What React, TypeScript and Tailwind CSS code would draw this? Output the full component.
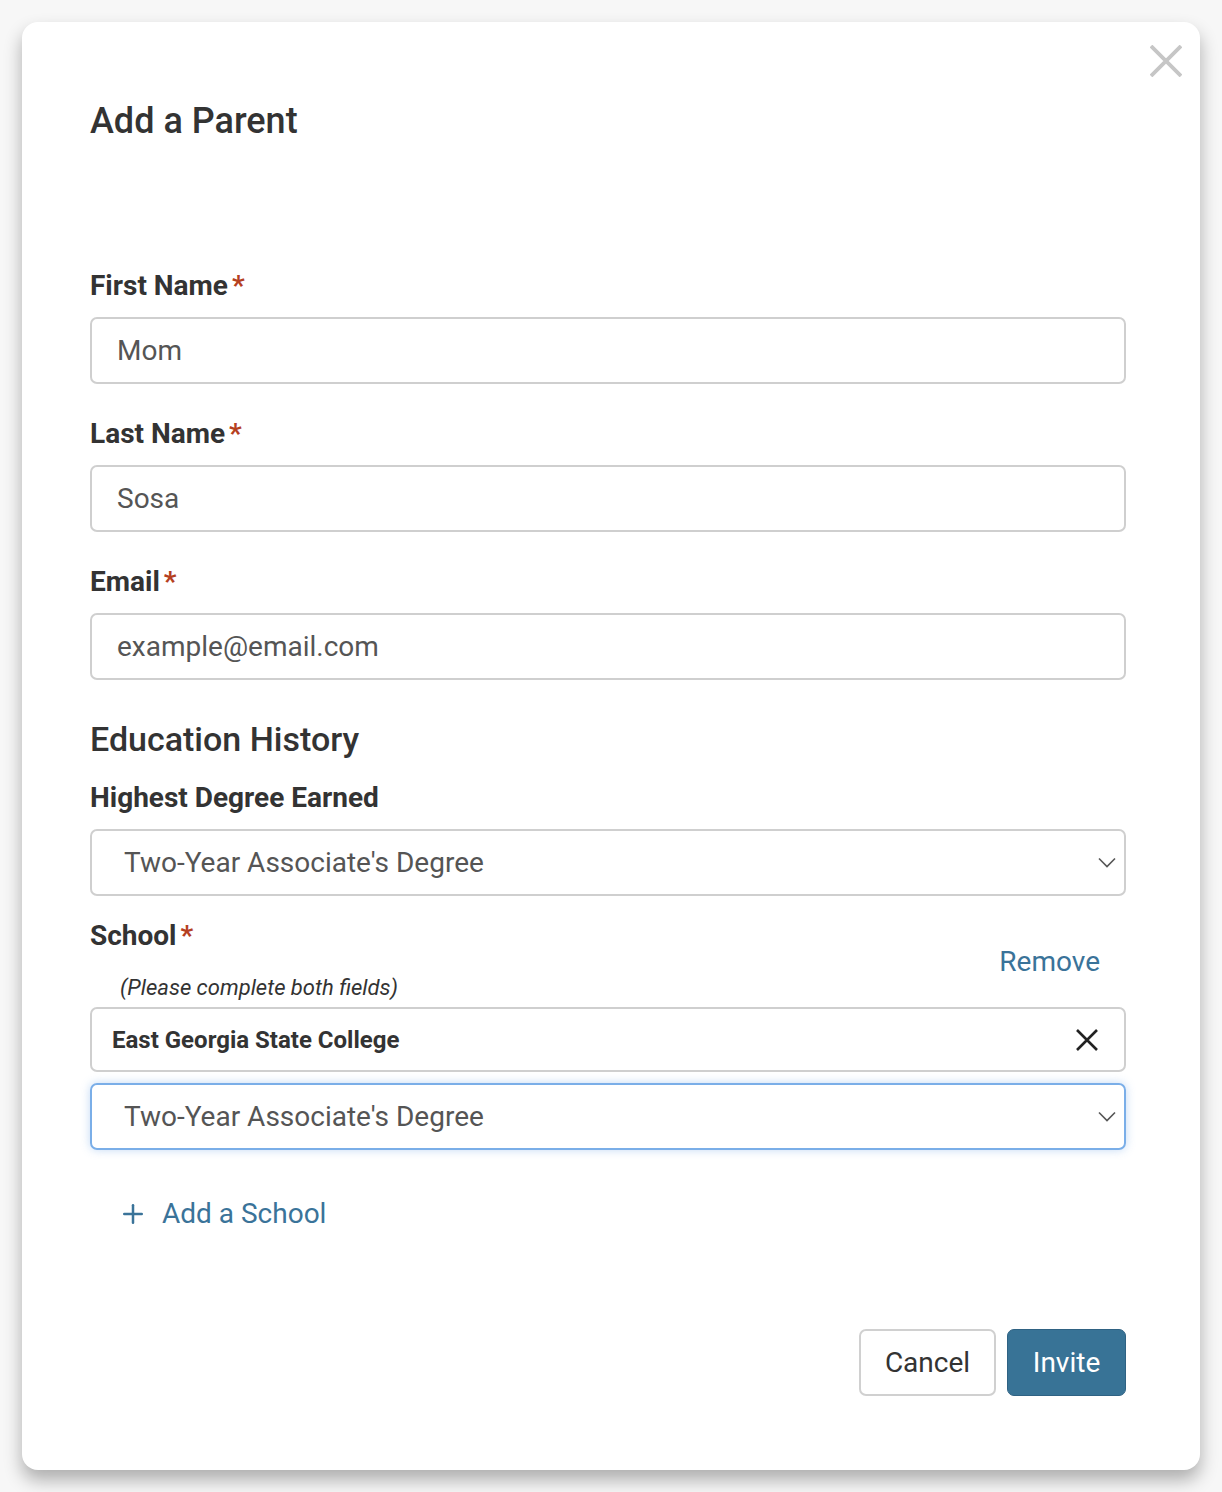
import { Plus } from 'lucide-react';

const Req = () => <span className="ml-[4px] text-[#b5401f]">*</span>;

const Label = ({ text, required }: { text: string; required?: boolean }) => (
  <div className="text-[28px] leading-[32px] font-bold text-[#333]">
    {text}
    {required && <Req />}
  </div>
);

const Cross = ({ size, stroke, className }: { size: number; stroke: number; className: string }) => (
  <svg width={size} height={size} viewBox={`0 0 ${size} ${size}`} className={className}>
    <path d={`M1 1L${size - 1} ${size - 1}M${size - 1} 1L1 ${size - 1}`} stroke="currentColor" strokeWidth={stroke} fill="none" />
  </svg>
);

const Chevron = () => (
  <svg width="18" height="11" viewBox="0 0 18 11" className="text-[#555]">
    <path d="M1 1.5L9 9.5L17 1.5" stroke="currentColor" strokeWidth="1.6" fill="none" />
  </svg>
);

const TextField = ({ value }: { value: string }) => (
  <div className="h-[67px] rounded-[7px] border-2 border-[#cfcfcf] flex items-center px-[25px] text-[28px] text-[#555]">
    {value}
  </div>
);

const SelectField = ({ value, focused }: { value: string; focused?: boolean }) => (
  <div
    className={
      focused
        ? 'h-[67px] rounded-[7px] border-2 border-[#7aaee8] shadow-[0_0_10px_rgba(122,174,232,0.45)] flex items-center justify-between pl-[32px] pr-[8px] text-[28px] text-[#555]'
        : 'h-[67px] rounded-[7px] border-2 border-[#cfcfcf] flex items-center justify-between pl-[32px] pr-[8px] text-[28px] text-[#555]'
    }
  >
    <span>{value}</span>
    <Chevron />
  </div>
);

export default function App() {
  return (
    <div
      className="min-h-[1492px] bg-[#f7f7f7] pt-[22px] px-[22px]"
      style={{ fontFamily: 'Roboto, "Liberation Sans", sans-serif' }}
    >
      <div className="relative w-[1178px] h-[1448px] bg-white rounded-[16px] shadow-[0_10px_18px_rgba(0,0,0,0.3)] pt-[78px] pl-[68px] pr-[74px] flex flex-col">
        <button className="absolute right-[18px] top-[23px] text-[#c6c6c6]">
          <Cross size={32} stroke={3.8} className="" />
        </button>

        <h2 className="text-[36px] leading-[42px] font-medium text-[#333]">Add a Parent</h2>

        <div className="mt-[128px]">
          <Label text="First Name" required />
          <div className="mt-[15px]">
            <TextField value="Mom" />
          </div>
        </div>

        <div className="mt-[34px]">
          <Label text="Last Name" required />
          <div className="mt-[15px]">
            <TextField value="Sosa" />
          </div>
        </div>

        <div className="mt-[34px]">
          <Label text="Email" required />
          <div className="mt-[15px]">
            <TextField value="example@email.com" />
          </div>
        </div>

        <h3 className="mt-[39px] text-[34px] leading-[40px] font-medium text-[#333]">Education History</h3>

        <div className="mt-[23px]">
          <Label text="Highest Degree Earned" />
          <div className="mt-[15px]">
            <SelectField value="Two-Year Associate's Degree" />
          </div>
        </div>

        <div className="mt-[24px]">
          <div className="flex justify-between">
            <div>
              <Label text="School" required />
              <div className="mt-[22px] pl-[30px] text-[22px] leading-[28px] italic text-[#333]">
                (Please complete both fields)
              </div>
            </div>
            <button className="mt-[25px] mr-[26px] self-start text-[28px] leading-[34px] text-[#3a7399]">Remove</button>
          </div>
          <div className="mt-[5px] h-[65px] rounded-[7px] border-2 border-[#cfcfcf] flex items-center justify-between pl-[20px] pr-[26px]">
            <span className="text-[24px] font-bold text-[#333]">East Georgia State College</span>
            <Cross size={22} stroke={2.6} className="text-[#222]" />
          </div>
          <div className="mt-[11px]">
            <SelectField value="Two-Year Associate's Degree" focused />
          </div>
        </div>

        <button className="mt-[47px] ml-[28px] flex items-center gap-[14px] text-[#3a7399] self-start">
          <Plus size={30} strokeWidth={2} />
          <span className="text-[28px] leading-[34px]">Add a School</span>
        </button>

        <div className="mt-[98px] flex justify-end gap-[11px]">
          <button className="w-[137px] h-[67px] rounded-[7px] border-2 border-[#d0d0d0] bg-white text-[28px] text-[#333]">
            Cancel
          </button>
          <button className="w-[119px] h-[67px] rounded-[7px] border border-[#2f6283] bg-[#387396] text-[28px] text-white">
            Invite
          </button>
        </div>
      </div>
    </div>
  );
}
